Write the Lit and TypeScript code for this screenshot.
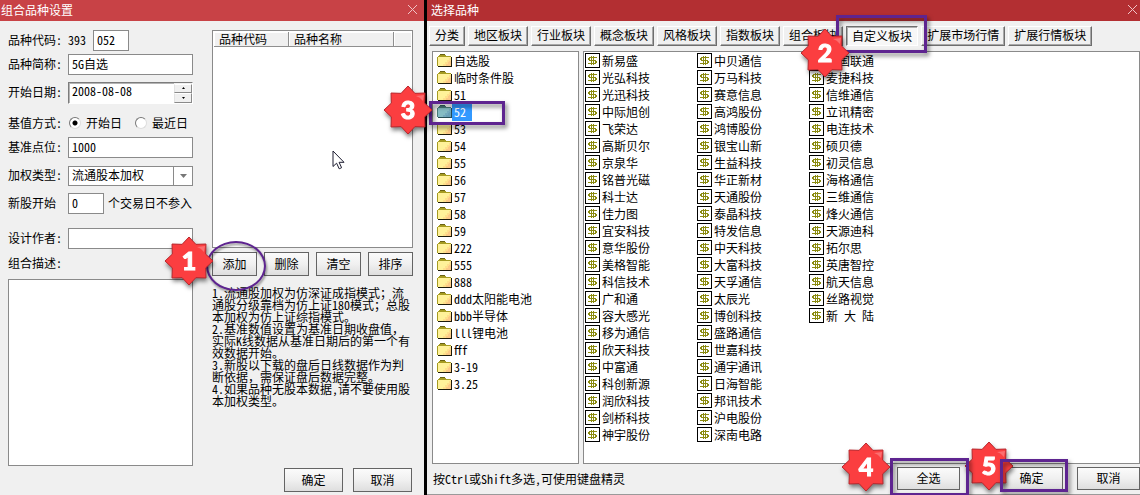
import { LitElement, html, svg, css, nothing } from "lit";
import { customElement, property } from "lit/decorators.js";

const TABS = [
  "分类", "地区板块", "行业板块", "概念板块", "风格板块", "指数板块",
  "组合板块", "自定义板块", "扩展市场行情", "扩展行情板块",
];
const ACTIVE_TAB = "自定义板块";

const FOLDERS = [
  "自选股", "临时条件股", "51", "52", "53", "54", "55", "56", "57", "58", "59",
  "222", "555", "888", "ddd太阳能电池", "bbb半导体", "lll锂电池", "fff", "3-19", "3.25",
];
const ACTIVE_FOLDER = "52";

const STOCKS = [
  "新易盛", "光弘科技", "光迅科技", "中际旭创", "飞荣达", "高斯贝尔", "京泉华", "铭普光磁",
  "科士达", "佳力图", "宜安科技", "意华股份", "美格智能", "科信技术", "广和通", "容大感光",
  "移为通信", "欣天科技", "中富通", "科创新源", "润欣科技", "剑桥科技", "神宇股份",
  "中贝通信", "万马科技", "赛意信息", "高鸿股份", "鸿博股份", "银宝山新", "生益科技", "华正新材",
  "天通股份", "泰晶科技", "特发信息", "中天科技", "大富科技", "天孚通信", "太辰光", "博创科技",
  "盛路通信", "世嘉科技", "通宇通讯", "日海智能", "邦讯技术", "沪电股份", "深南电路",
  "中国联通", "麦捷科技", "信维通信", "立讯精密", "电连技术", "硕贝德", "初灵信息", "海格通信",
  "三维通信", "烽火通信", "天源迪科", "拓尔思", "英唐智控", "航天信息", "丝路视觉", "新 大 陆",
];

const NOTES = [
  "1.流通股加权为仿深证成指模式；流通股分级靠档为仿上证180模式；总股本加权为仿上证综指模式。",
  "2.基准数值设置为基准日期收盘值，实际K线数据从基准日期后的第一个有效数据开始。",
  "3.新股以下载的盘后日线数据作为判断依据，需保证盘后数据完整。",
  "4.如果品种无股本数据,请不要使用股本加权类型。",
];

/** Latin runs take half-width glyphs, while the Chinese punctuation stays full width. */
const mixed = (text: string) =>
  text.split(/([!-~]+)/).map((part, i) => (i % 2 ? html`<span class="half">${part}</span>` : part));

const base = css`
  * { box-sizing: border-box; }
  button, input, select, textarea {
    font: inherit;
    font-feature-settings: "hwid";
    color: inherit;
    margin: 0;
    border-radius: 0;
    outline: none;
  }
  .title {
    display: flex;
    align-items: center;
    justify-content: space-between;
    height: 21px;
    padding: 0 6px 2px 1px;
    color: #fff;
    margin: 0;
    font-size: 12px;
    font-weight: 400;
  }
  .close {
    display: flex;
    padding: 0;
    border: 0;
    background: none;
    color: #f0c4c6;
  }
  .push {
    height: 24px;
    padding: 0 0 1px;
    border: 1px solid #646464;
    background: linear-gradient(#fbfbfb, #f0f0f0 50%, #dedede);
    white-space: nowrap;
  }
  .marked { position: relative; display: flex; }
  .marked > .push { flex: 1; }
`;

const closeIcon = html`<svg width="11" height="11" viewBox="0 0 11 11" fill="none" stroke="currentColor">
  <path d="M1 1L10 10M10 1L1 10" />
</svg>`;

const folderIcon = (on: boolean) => html`<svg width="15" height="15" viewBox="0 0 15 15" shape-rendering="crispEdges">
  <path d="M0 4H1V3H2V2H3V1H8V2H9V3H14V13H0Z" fill=${on ? "#86bcc4" : "#fff29a"} />
  <path d="M6 12V11H8V9H10V7H12V5H14V13H6Z" fill=${on ? "#74a9bd" : "#ffe08c"} />
  <path d="M9 13V11H11V9H12V8H14V13Z" fill=${on ? "#6a9fb5" : "#fcc988"} />
  <path d="M0 4H1V3H2V2H3V1H8V2H9V3H14V4H1V13H0Z" fill=${on ? "#4b7f7c" : "#a69c22"} />
  <path d="M3 1H8V2H3Z" fill=${on ? "#35605f" : "#6b6414"} />
  <path d="M14 4H15V14H1V13H14Z" fill=${on ? "#274c55" : "#1c1a0a"} />
</svg>`;

const stockIcon = html`<svg width="15" height="15" viewBox="0 0 15 15" shape-rendering="crispEdges">
  <path d="M0.5 0.5H14.5V14.5H0.5Z" fill="#fff" stroke="#000" />
  <path d="M6 3h1v9h-1zM8 3h1v9h-1zM4 4h8v1h-8zM3 5h2v2h-2zM4 7h7v1h-7zM10 8h2v2h-2zM3 10h8v1h-8z" fill="#8b8b10" />
</svg>`;

/** Numbered eight-pointed step marker. */
@customElement("step-badge")
export class StepBadge extends LitElement {
  @property({ type: Number }) step = 1;

  static styles = css`
    :host { display: block; width: 54px; height: 54px; pointer-events: none; }
    .star { display: block; filter: drop-shadow(1px 3px 2px rgba(0, 0, 0, 0.5)); }
    .num { font: 900 25px Lato, sans-serif; }
  `;

  render() {
    const pts: string[] = [];
    for (let i = 0; i < 16; i++) {
      const r = i % 2 ? 18 : 24;
      const a = (i * Math.PI) / 8;
      pts.push(`${(27 + r * Math.sin(a)).toFixed(2)},${(27 - r * Math.cos(a)).toFixed(2)}`);
    }
    return html`<svg class="star" width="54" height="54" viewBox="0 0 54 54">
      ${svg`<polygon points=${pts.join(" ")} fill="#fb3e40" stroke="#b8262c" stroke-linejoin="round" />`}
      <path d="M35 13L43 12L42 18Q39 14 35 13Z" fill="#fff" opacity="0.25" />
      <text class="num" x="27" y="36" text-anchor="middle" fill="#fff" stroke="#fff">${this.step}</text>
    </svg>`;
  }
}

/** Left window: definition of the custom index. */
@customElement("combo-dialog")
export class ComboDialog extends LitElement {
  static styles = [base, css`
    :host { display: flex; flex-direction: column; background: #f0f0f0; }
    .title { background: #c84246; }
    .body { flex: 1; display: flex; gap: 19px; padding: 9px 11px 0 8px; }
    .form { flex: 185 1 0; min-width: 0; display: flex; flex-direction: column; padding-bottom: 29px; }
    .side { flex: 201 1 0; min-width: 0; display: flex; flex-direction: column; padding-bottom: 3px; }
    .row { display: flex; align-items: center; height: 21px; }
    .near { margin-top: 3px; }
    .mid { margin-top: 7px; }
    .far { margin-top: 10px; }
    .apart { margin-top: 14px; }
    .label, .prefix, .after { padding-bottom: 2px; }
    .label { flex: none; width: 60px; }
    .prefix { width: 25px; }
    .field { height: 21px; min-width: 0; flex: 1; padding: 0 3px 3px; border: 1px solid #8a8a8a; background: #fff; }
    .short { flex: none; width: 36px; }
    .after { padding-left: 4px; white-space: nowrap; }
    .date { flex: 1; min-width: 0; display: flex; height: 22px; border: 1px solid #fff; border-top-color: #7c7c7c; border-left-color: #7c7c7c; background: #fff; box-shadow: inset 1px 1px #b4b4b4; }
    .date-in { flex: 1; min-width: 0; padding: 0 3px 3px; border: 0; background: none; }
    .spin { display: flex; flex-direction: column; width: 18px; padding-top: 1px; background: #f0f0f0; }
    .step { flex: 1; display: flex; align-items: center; justify-content: center; padding: 0; border: 1px solid #8a8a8a; border-top-color: #fff; border-left-color: #e2e2e2; background: #f0f0f0; }
    .choice { display: flex; align-items: center; gap: 5px; padding: 0 0 1px 1px; margin-right: 12px; white-space: nowrap; }
    .radio { appearance: none; width: 12px; height: 12px; border: 1px solid #777; border-right-color: #ddd; border-bottom-color: #ddd; border-radius: 50%; background: #fff; }
    .radio:checked { background: radial-gradient(circle, #000 2px, #fff 3px); }
    .pick { position: relative; flex: 1; min-width: 0; display: flex; height: 20px; border: 1px solid #8a8a8a; background: #fff; }
    .select { appearance: none; flex: 1; min-width: 0; padding: 0 20px 1px 3px; border: 0; background: none; }
    .arrow { position: absolute; right: 0; top: 0; bottom: 0; width: 19px; display: flex; align-items: center; justify-content: center; border-left: 1px solid #8a8a8a; pointer-events: none; }
    .desc-label { height: 24px; }
    .desc { flex: 1; resize: none; border: 1px solid #8a8a8a; background: #fff; padding: 3px; }
    .list { position: relative; height: 218px; border: 1px solid #8a8a8a; background: #fff; padding: 1px; }
    .table { width: 100%; table-layout: fixed; border-collapse: separate; border-spacing: 0; }
    .th { height: 15px; padding: 0 0 0 5px; font-weight: 400; text-align: left; line-height: 14px; background: #f0f0f0; border-right: 1px solid #8f8f8f; border-bottom: 1px solid #8f8f8f; box-shadow: inset 1px 1px #fff; }
    .code { width: 75px; }
    .name { width: 105px; }
    .th:last-child { border-right: 0; }
    .cursor { position: absolute; left: 119px; top: 119px; }
    .tools { display: grid; grid-template-columns: repeat(4, 1fr); gap: 7px; margin-top: 4px; }
    .ring { position: absolute; left: -6px; top: -11px; width: 60px; height: 50px; border: 2px solid #5e2490; border-radius: 50%; filter: drop-shadow(1px 2px 1px rgba(0, 0, 0, 0.45)); pointer-events: none; }
    .badge { position: absolute; left: -50px; top: -18px; }
    .notes { margin: 11px 0 0; padding: 0; list-style: none; line-height: 12px; word-break: break-all; font-feature-settings: normal; }
    .half { font-feature-settings: "hwid"; }
    .actions { display: flex; justify-content: flex-end; gap: 10px; margin-top: auto; padding-right: 1px; }
    .wide { width: 59px; }
  `];

  render() {
    return html`
      <h2 class="title">组合品种设置<button class="close" aria-label="关闭">${closeIcon}</button></h2>
      <div class="body">
        <form class="form" @submit=${(e: Event) => e.preventDefault()}>
          <div class="row">
            <label class="label" for="code">品种代码:</label><span class="prefix">393</span>
            <input class="field short" id="code" .value=${"052"} />
          </div>
          <div class="row near">
            <label class="label" for="name">品种简称:</label>
            <input class="field" id="name" .value=${"5G自选"} />
          </div>
          <div class="row mid">
            <label class="label" for="date">开始日期:</label>
            <div class="date">
              <input class="date-in" id="date" .value=${"2008-08-08"} />
              <div class="spin">
                <button class="step" type="button" aria-label="增加"><svg width="3" height="2"><path d="M0 2L1.5 0L3 2Z" /></svg></button>
                <button class="step" type="button" aria-label="减少"><svg width="3" height="2"><path d="M0 0L1.5 2L3 0Z" /></svg></button>
              </div>
            </div>
          </div>
          <div class="row far" role="radiogroup" aria-label="基值方式">
            <span class="label">基值方式:</span>
            <label class="choice"><input class="radio" type="radio" name="base" checked />开始日</label>
            <label class="choice"><input class="radio" type="radio" name="base" />最近日</label>
          </div>
          <div class="row near">
            <label class="label" for="point">基准点位:</label>
            <input class="field" id="point" .value=${"1000"} />
          </div>
          <div class="row mid">
            <label class="label" for="weight">加权类型:</label>
            <div class="pick">
              <select class="select" id="weight"><option>流通股本加权</option></select>
              <span class="arrow"><svg width="7" height="4"><path d="M0 0H7L3.5 4Z" fill="#777" /></svg></span>
            </div>
          </div>
          <div class="row mid">
            <label class="label" for="days">新股开始</label>
            <input class="field short" id="days" .value=${"0"} />
            <span class="after">个交易日不参入</span>
          </div>
          <div class="row apart">
            <label class="label" for="author">设计作者:</label>
            <input class="field" id="author" />
          </div>
          <div class="row near desc-label"><label class="label" for="desc">组合描述:</label></div>
          <textarea class="desc near" id="desc"></textarea>
        </form>
        <div class="side">
          <div class="list">
            <table class="table">
              <thead><tr><th class="th code">品种代码</th><th class="th name">品种名称</th><th class="th"></th></tr></thead>
            </table>
            <svg class="cursor" width="13" height="20" viewBox="0 0 13 20">
              <path d="M1 1V16.5L4.6 13.2L7.2 18.8L9.6 17.7L7.1 12.3H12Z" fill="#fff" stroke="#1c1c30" />
            </svg>
          </div>
          <div class="tools">
            <div class="marked">
              <button class="push">添加</button>
              <span class="ring"></span>
              <step-badge class="badge" .step=${1}></step-badge>
            </div>
            <button class="push">删除</button>
            <button class="push">清空</button>
            <button class="push">排序</button>
          </div>
          <ul class="notes">${NOTES.map((n) => html`<li>${mixed(n)}</li>`)}</ul>
          <div class="actions">
            <button class="push wide">确定</button>
            <button class="push wide">取消</button>
          </div>
        </div>
      </div>`;
  }
}

/** Right window: picking stocks out of a block. */
@customElement("picker-dialog")
export class PickerDialog extends LitElement {
  static styles = [base, css`
    :host { display: flex; flex-direction: column; background: #f0f0f0; border-bottom: 1px solid #9a9a9a; }
    .title { background: #b32f32; padding-right: 2px; padding-left: 4px; }
    .tabs { display: flex; flex-wrap: wrap; gap: 3px; padding: 5px 2px; }
    .tab { height: 20px; padding: 0 5px 2px; border: 1px solid #fff; border-right-color: #6e6e6e; border-bottom-color: #6e6e6e; background: #f0f0f0; box-shadow: inset -1px -1px #a8a8a8; white-space: nowrap; line-height: 16px; }
    .tab.on { border-color: #6e6e6e #fff #fff #6e6e6e; background: #f7f7f7; box-shadow: inset 1px 1px #b0b0b0; padding: 0 5px; }
    .lists { flex: 1; display: flex; gap: 4px; padding-left: 5px; }
    .folders, .stocks { margin: 0; padding: 1px 0 0 4px; list-style: none; border: 1px solid #8a8a8a; background: #fff; }
    .folders { flex: 147 1 147px; }
    .stocks { flex: 557 1 557px; padding-left: 1px; display: grid; grid-auto-flow: column; grid-template-rows: repeat(23, 17px); grid-auto-columns: 112px; align-content: start; }
    .item { position: relative; display: flex; align-items: flex-start; height: 17px; line-height: 15px; white-space: nowrap; }
    .text { height: 17px; padding: 0 6px 0 2px; }
    .text.on { background: #3399ff; color: #fff; }
    .foot { display: flex; align-items: center; padding: 3px 0 4px 6px; }
    .hint { margin-right: auto; }
    .foot .push { width: 63px; height: 23px; }
    .gap-l { margin-right: 40px; }
    .gap-s { margin-right: 14px; }
    .frame { position: absolute; border: 3px solid #5e2490; filter: drop-shadow(2px 3px 2px rgba(0, 0, 0, 0.5)); pointer-events: none; z-index: 1; }
    .badge { position: absolute; z-index: 2; }
    .under { z-index: 0; }
    .frame-tab { left: -10px; top: -11px; width: 91px; height: 38px; }
    .badge-tab { left: -48px; top: 0; }
    .frame-folder { left: -8px; top: -3px; width: 76px; height: 24px; }
    .badge-folder { left: -56px; top: -21px; }
    .frame-all { left: -7px; top: -9px; width: 79px; height: 38px; }
    .badge-all { left: -58px; top: -27px; }
    .frame-ok { left: 0; top: -8px; width: 68px; height: 33px; }
    .badge-ok { left: -38px; top: -28px; }
  `];

  render() {
    return html`
      <h2 class="title">选择品种<button class="close" aria-label="关闭">${closeIcon}</button></h2>
      <nav class="tabs" role="tablist">
        ${TABS.map((t) => {
          const on = t === ACTIVE_TAB;
          return html`<div class="marked">
            <button class="tab ${on ? "on" : ""}" role="tab" aria-selected=${on ? "true" : "false"}>${t}</button>
            ${on ? html`<span class="frame frame-tab"></span><step-badge class="badge badge-tab" .step=${2}></step-badge>` : nothing}
          </div>`;
        })}
      </nav>
      <div class="lists">
        <ul class="folders">
          ${FOLDERS.map((f) => {
            const on = f === ACTIVE_FOLDER;
            return html`<li class="item">${folderIcon(on)}<span class="text ${on ? "on" : ""}">${f}</span>
              ${on ? html`<span class="frame frame-folder"></span><step-badge class="badge badge-folder" .step=${3}></step-badge>` : nothing}
            </li>`;
          })}
        </ul>
        <ul class="stocks">
          ${STOCKS.map((s) => html`<li class="item">${stockIcon}<span class="text">${s}</span></li>`)}
        </ul>
      </div>
      <div class="foot">
        <span class="hint">按Ctrl或Shift多选,可使用键盘精灵</span>
        <div class="marked gap-l">
          <button class="push">全选</button><span class="frame frame-all"></span>
          <step-badge class="badge badge-all" .step=${4}></step-badge>
        </div>
        <div class="marked gap-s">
          <button class="push">确定</button><step-badge class="badge under badge-ok" .step=${5}></step-badge>
          <span class="frame frame-ok"></span>
        </div>
        <button class="push">取消</button>
      </div>`;
  }
}

@customElement("app-root")
export class AppRoot extends LitElement {
  static styles = css`
    :host {
      display: flex;
      gap: 3px;
      min-height: 100vh;
      overflow: hidden;
      background: #000;
      color: #000;
      font: 12px/16px "Noto Sans CJK SC", sans-serif;
      font-feature-settings: "hwid";
    }
    .left { flex: 424 1 0; min-width: 0; }
    .right { flex: 713 1 0; min-width: 0; }
  `;

  render() {
    return html`<combo-dialog class="left"></combo-dialog><picker-dialog class="right"></picker-dialog>`;
  }
}
